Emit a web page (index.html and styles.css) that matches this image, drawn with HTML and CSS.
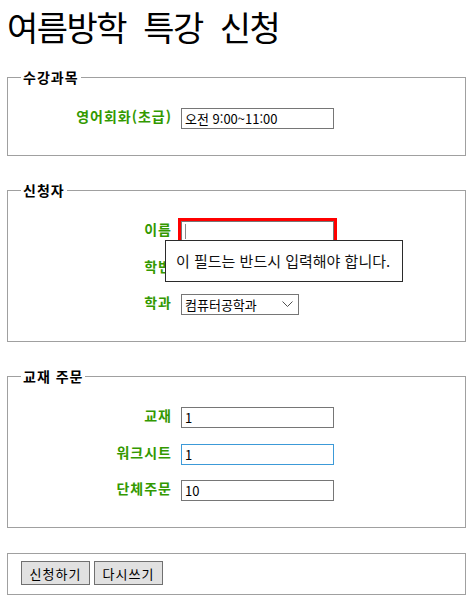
FILE: index.html
```html
<!DOCTYPE html>
<html lang="ko">
<head>
<meta charset="utf-8">
<title>여름방학 특강 신청</title>
<link rel="stylesheet" href="styles.css">
</head>
<body>
<h1 class="title">여름방학 특강 신청</h1>
<form class="form">
  <fieldset class="group">
    <legend class="group-title">수강과목</legend>
    <div class="rows">
      <label class="row-label">영어회화(초급)</label>
      <input class="field" type="text" value="오전 9:00~11:00">
    </div>
  </fieldset>

  <fieldset class="group">
    <legend class="group-title">신청자</legend>
    <div class="rows">
      <label class="row-label">이름</label>
      <div class="cell">
        <input class="field field-invalid" type="text" required>
        <span class="caret"></span>
        <div class="bubble">이 필드는 반드시 입력해야 합니다.</div>
      </div>
      <label class="row-label">학번</label>
      <input class="field" type="text">
      <label class="row-label">학과</label>
      <div class="cell select-wrap">
        <select class="picker">
          <option>컴퓨터공학과</option>
        </select>
        <svg class="chevron" width="11" height="6" viewBox="0 0 11 6"><path d="M0.5 0.5 L5.5 5.5 L10.5 0.5" fill="none" stroke="#505050" stroke-width="1"/></svg>
      </div>
    </div>
  </fieldset>

  <fieldset class="group">
    <legend class="group-title">교재 주문</legend>
    <div class="rows">
      <label class="row-label">교재</label>
      <input class="field" type="text" value="1">
      <label class="row-label">워크시트</label>
      <input class="field field-focus" type="text" value="1">
      <label class="row-label">단체주문</label>
      <input class="field" type="text" value="10">
    </div>
  </fieldset>

  <fieldset class="group group-actions">
    <div class="actions">
      <button class="btn" type="button">신청하기</button>
      <button class="btn" type="button">다시쓰기</button>
    </div>
  </fieldset>
</form>
</body>
</html>
```

FILE: styles.css
```css
html, body {
  margin: 0;
  padding: 0;
  background: #ffffff;
}

body {
  font-family: "Noto Sans CJK KR", "Noto Sans", sans-serif;
  color: #000;
}

.title {
  margin: 7px 0 21px 7px;
  font-size: 34px;
  line-height: 40px;
  font-weight: 400;
  letter-spacing: -1.5px;
  word-spacing: 9px;
}

.form {
  margin: 0 8px 0 7px;
}

.group {
  margin: 0 0 25px 0;
  border: 1px solid #a0a0a0;
  padding: 21px 12px 26px 13px;
  min-width: 0;
}

.group-title {
  padding: 0 2px;
  font-size: 14px;
  line-height: 19px;
  font-weight: 700;
  letter-spacing: 1px;
}

.rows {
  display: grid;
  grid-template-columns: 150px auto;
  grid-auto-rows: 21px;
  column-gap: 10px;
  row-gap: 15.5px;
  justify-content: start;
  align-items: center;
}

.row-label {
  text-align: right;
  color: #339900;
  font-size: 14px;
  font-weight: 700;
  line-height: 17px;
  padding-bottom: 4px;
  letter-spacing: 1px;
  margin-right: -1px;
  white-space: nowrap;
}

.field {
  box-sizing: border-box;
  width: 153px;
  height: 21px;
  margin: 0;
  padding: 1px 3px;
  border: 1px solid #767676;
  font-family: "Noto Sans CJK KR", "Liberation Sans", sans-serif;
  font-size: 13px;
  color: #000;
  background: #fff;
  outline: none;
}

.field-invalid {
  outline: 3px solid #ff0000;
  outline-offset: 0;
}

.field-focus {
  border-color: #3c9ad8;
}

.cell {
  position: relative;
  display: flex;
}

.caret {
  position: absolute;
  left: 4px;
  top: 3px;
  width: 1px;
  height: 15px;
  background: #8a8a8a;
}

.bubble {
  position: absolute;
  left: -16px;
  top: 19px;
  box-sizing: border-box;
  width: 238px;
  height: 42px;
  padding: 0 0 0 10px;
  border: 1px solid #2b2b2b;
  background: #fff;
  font-size: 15px;
  line-height: 40px;
  color: #111;
  white-space: nowrap;
  z-index: 2;
}

.select-wrap {
  width: 118px;
}

.picker {
  appearance: none;
  -webkit-appearance: none;
  box-sizing: border-box;
  width: 118px;
  height: 21px;
  margin: 0;
  padding: 0 0 0 3px;
  border: 1px solid #767676;
  border-radius: 0;
  background: #fff;
  font-family: "Noto Sans CJK KR", sans-serif;
  font-size: 13px;
  color: #000;
}

.chevron {
  position: absolute;
  right: 6px;
  top: 7px;
  pointer-events: none;
}

.group-actions {
  margin-bottom: 0;
  padding: 7px 12px 9px 13px;
}

.actions {
  display: flex;
  gap: 4px;
}

.btn {
  box-sizing: border-box;
  width: 69px;
  height: 24px;
  padding: 0;
  margin: 0;
  border: 1px solid #707070;
  background: #e1e1e1;
  font-family: "Noto Sans CJK KR", sans-serif;
  font-size: 13px;
  letter-spacing: 1px;
  color: #000;
  border-radius: 0;
}
```
